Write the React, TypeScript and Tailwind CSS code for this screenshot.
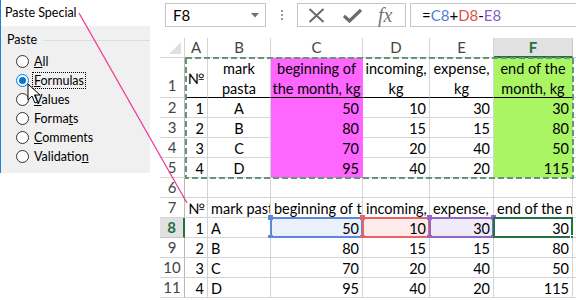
import React from "react";

type Align = "l" | "c" | "r";
type Fill = "pink" | "green" | "none" | "blue" | "red" | "purple";

const alignCls: Record<Align, string> = {
  l: "justify-start text-left",
  c: "justify-center text-center",
  r: "justify-end text-right",
};

const fillCls: Record<Fill, string> = {
  pink: "bg-[#ff66ff] border-[#ff66ff]",
  green: "bg-[#a9f564] border-[#a9f564]",
  none: "bg-white border-[#d4d4d4]",
  blue: "bg-[#ebf1fc] border-[#d4d4d4]",
  red: "bg-[#fdeaea] border-[#d4d4d4]",
  purple: "bg-[#f0ebf8] border-[#d4d4d4]",
};

function Cell({
  children,
  align = "r",
  fill = "none",
  extra = "",
}: {
  children?: React.ReactNode;
  align?: Align;
  fill?: Fill;
  extra?: string;
}) {
  return (
    <div
      className={`relative flex items-center whitespace-nowrap border-r border-b px-[3px] pt-[2px] text-[14.5px] leading-[20px] text-black ${alignCls[align]} ${fillCls[fill]} ${extra}`}
    >
      {children}
    </div>
  );
}

function ColHead({ children, active }: { children?: React.ReactNode; active?: boolean }) {
  return (
    <div
      className={
        active
          ? "flex items-center justify-center border-r border-b-2 border-r-[#c6c6c6] border-b-[#217346] bg-[#e1e1e1] text-[15px] font-bold text-[#217346]"
          : "flex items-center justify-center border-r border-b border-[#d4d4d4] bg-white text-[15px] text-[#444]"
      }
    >
      {children}
    </div>
  );
}

function RowHead({ n, active, bottom }: { n: string; active?: boolean; bottom?: boolean }) {
  return (
    <div
      className={
        active
          ? "flex items-center justify-center border-r-2 border-b border-r-[#217346] border-b-[#c6c6c6] bg-[#e1e1e1] text-[15px] font-bold text-[#217346]"
          : `flex justify-center border-r border-b border-r-[#b8b8b8] border-b-[#d4d4d4] bg-white text-[15px] text-[#444] ${bottom ? "items-end pb-px" : "items-center"}`
      }
    >
      {n}
    </div>
  );
}

// coloured reference box that the formula draws round C8, D8, E8
function RefBox({ line, dot }: { line: string; dot: string }) {
  const sq = `absolute h-[5px] w-[5px] ${dot}`;
  return (
    <>
      <div className={`pointer-events-none absolute -inset-px border-2 ${line}`} />
      <div className={`${sq} -left-[3px] -top-[3px]`} />
      <div className={`${sq} -right-[3px] -top-[3px]`} />
      <div className={`${sq} -left-[3px] -bottom-[3px]`} />
      <div className={`${sq} -right-[3px] -bottom-[3px]`} />
    </>
  );
}

function Radio({ label, checked }: { label: React.ReactNode; checked?: boolean }) {
  return (
    <div className="flex h-[19px] items-center gap-[3px]">
      <div
        className={
          checked
            ? "flex h-[13px] w-[13px] items-center justify-center rounded-full border border-[#0078d7] bg-white"
            : "h-[13px] w-[13px] rounded-full border border-[#333] bg-white"
        }
      >
        {checked && <div className="h-[7px] w-[7px] rounded-full bg-[#0078d7]" />}
      </div>
      <span
        className={
          checked
            ? "border border-dotted border-black px-[1px] leading-[15px]"
            : "border border-transparent px-[1px] leading-[15px]"
        }
      >
        {label}
      </span>
    </div>
  );
}

export default function App() {
  const data = [
    ["1", "A", "50", "10", "30", "30"],
    ["2", "B", "80", "15", "15", "80"],
    ["3", "C", "70", "20", "40", "50"],
    ["4", "D", "95", "40", "20", "115"],
  ];

  return (
    <div className="relative flex h-[300px] w-[576px] items-start overflow-hidden bg-white font-['Lato',sans-serif]">
      {/* Paste Special dialog */}
      <div className="flex h-[173px] w-[150px] shrink-0 flex-col border-l border-[#1883d7] bg-[#f0f0f0] font-['Lato',sans-serif] text-[12.5px] text-black">
        <div className="flex h-[26px] items-center bg-white pl-[4px]">Paste Special</div>
        <div className="mt-[6px] flex items-center gap-[6px] pl-[6px] leading-[16px]">
          <span>Paste</span>
          <div className="h-px flex-1 bg-[#dcdcdc]" />
        </div>
        <div className="mt-[4px] flex flex-col pl-[15px]">
          <Radio label={<><u>A</u>ll</>} />
          <Radio checked label={<><u>F</u>ormulas</>} />
          <Radio label={<><u>V</u>alues</>} />
          <Radio label={<>Forma<u>t</u>s</>} />
          <Radio label={<><u>C</u>omments</>} />
          <Radio label={<>Validatio<u>n</u></>} />
        </div>
      </div>

      {/* worksheet */}
      <div className="ml-[10px] flex w-[416px] shrink-0 flex-col overflow-hidden">
        {/* formula bar */}
        <div className="flex h-[38px] items-start pt-[3px]">
          <div className="ml-[5px] flex h-[24px] w-[101px] shrink-0 items-center justify-between border border-[#c6c6c6] pl-[7px] pr-[6px] text-[15px]">
            <span>F8</span>
            <svg width="8" height="5" viewBox="0 0 8 5">
              <path d="M0 0 H8 L4 4.5 Z" fill="#707070" />
            </svg>
          </div>
          <div className="flex h-[24px] w-[31px] shrink-0 flex-col items-center justify-center gap-[2px]">
            <div className="h-[2px] w-[2px] bg-[#9a9a9a]" />
            <div className="h-[2px] w-[2px] bg-[#9a9a9a]" />
            <div className="h-[2px] w-[2px] bg-[#9a9a9a]" />
          </div>
          <div className="flex h-[24px] w-[109px] shrink-0 items-center border border-[#c6c6c6] pl-[10px]">
            <svg width="17" height="15" viewBox="0 0 17 15">
              <path d="M1.5 1 L15.5 14 M15.5 1 L1.5 14" stroke="#6b6b6b" strokeWidth="2" />
            </svg>
            <svg className="ml-[18px]" width="19" height="15" viewBox="0 0 19 15">
              <path d="M1 8 L6.5 13 L18 2" stroke="#6b6b6b" strokeWidth="3.2" fill="none" />
            </svg>
            <span className="ml-[16px] font-['Liberation_Serif',serif] text-[20px] italic leading-[20px] text-[#777]">
              fx
            </span>
          </div>
          <div className="ml-[4px] flex h-[24px] flex-1 items-center border border-r-0 border-[#c6c6c6] pl-[11px] text-[15px]">
            <span>=</span>
            <span className="text-[#4f7fe0]">C8</span>
            <span>+</span>
            <span className="text-[#e05050]">D8</span>
            <span>-</span>
            <span className="text-[#8e5cc8]">E8</span>
          </div>
        </div>

        {/* grid */}
        <div className="relative">
          <div className="grid grid-cols-[25px_23px_63px_92px_67px_64px_79px_20px] grid-rows-[20px_40px_repeat(10,20px)]">
            {/* column headers */}
            <div className="relative border-r border-b border-[#d4d4d4] bg-white">
              <svg className="absolute bottom-[3px] right-[3px]" width="12" height="12" viewBox="0 0 12 12">
                <path d="M12 0 V12 H0 Z" fill="#dfdfdf" />
              </svg>
            </div>
            <ColHead>A</ColHead>
            <ColHead>B</ColHead>
            <ColHead>C</ColHead>
            <ColHead>D</ColHead>
            <ColHead>E</ColHead>
            <ColHead active>F</ColHead>
            <ColHead />

            {/* row 1 */}
            <RowHead n="1" bottom />
            <Cell align="c" extra="border-b-black">№</Cell>
            <Cell align="c" extra="border-b-black whitespace-normal">
              <div className="leading-[20px]">mark<br />pasta</div>
            </Cell>
            <Cell align="c" fill="pink" extra="border-b-black whitespace-normal">
              <div className="leading-[20px]">beginning of<br />the month, kg</div>
            </Cell>
            <Cell align="c" extra="border-b-black whitespace-normal">
              <div className="leading-[20px]">incoming,<br />kg</div>
            </Cell>
            <Cell align="c" extra="border-b-black whitespace-normal">
              <div className="leading-[20px]">expense,<br />kg</div>
            </Cell>
            <Cell align="c" fill="green" extra="border-b-black whitespace-normal">
              <div className="leading-[20px]">end of the<br />month, kg</div>
            </Cell>
            <Cell />

            {/* rows 2-5 */}
            {data.map((r, i) => (
              <React.Fragment key={"a" + i}>
                <RowHead n={String(i + 2)} />
                <Cell>{r[0]}</Cell>
                <Cell align="c">{r[1]}</Cell>
                <Cell fill="pink">{r[2]}</Cell>
                <Cell>{r[3]}</Cell>
                <Cell>{r[4]}</Cell>
                <Cell fill="green">{r[5]}</Cell>
                <Cell />
              </React.Fragment>
            ))}

            {/* row 6 */}
            <RowHead n="6" />
            <Cell />
            <Cell />
            <Cell />
            <Cell />
            <Cell />
            <Cell />
            <Cell />

            {/* row 7: long headers cut at the cell edge */}
            <RowHead n="7" />
            <Cell align="l">№</Cell>
            <Cell align="l" extra="overflow-hidden">mark past</Cell>
            <Cell align="l" extra="overflow-hidden">beginning of tl</Cell>
            <Cell align="l" extra="overflow-hidden">incoming,</Cell>
            <Cell align="l" extra="overflow-hidden">expense,</Cell>
            <Cell align="l" extra="overflow-hidden">end of the m</Cell>
            <Cell />

            {/* rows 8-11 */}
            {data.map((r, i) => (
              <React.Fragment key={"b" + i}>
                <RowHead n={String(i + 8)} active={i === 0} />
                <Cell>{r[0]}</Cell>
                <Cell align="l">{r[1]}</Cell>
                <Cell fill={i === 0 ? "blue" : "none"}>
                  {r[2]}
                  {i === 0 && <RefBox line="border-[#5b87e0]" dot="bg-[#5b87e0]" />}
                </Cell>
                <Cell fill={i === 0 ? "red" : "none"}>
                  {r[3]}
                  {i === 0 && <RefBox line="border-[#e86464]" dot="bg-[#e86464]" />}
                </Cell>
                <Cell fill={i === 0 ? "purple" : "none"}>
                  {r[4]}
                  {i === 0 && <RefBox line="border-[#9265c9]" dot="bg-[#9265c9]" />}
                </Cell>
                <Cell>
                  {r[5]}
                  {i === 0 && (
                    <>
                      <div className="pointer-events-none absolute -inset-px border-2 border-[#217346]" />
                      <div className="absolute -bottom-[4px] -right-[4px] h-[6px] w-[6px] border border-white bg-[#217346]" />
                    </>
                  )}
                </Cell>
                <Cell />
              </React.Fragment>
            ))}
          </div>

          {/* copy marquee around A1:F5 */}
          <svg className="pointer-events-none absolute left-0 top-0" width="416" height="160">
            <rect x="26" y="20" width="387" height="120" fill="none" stroke="#64957a" strokeWidth="2" strokeDasharray="6 3" />
          </svg>
        </div>
      </div>

      {/* annotation line and mouse pointer */}
      <svg className="pointer-events-none absolute left-0 top-0" width="576" height="300">
        <line x1="79" y1="13" x2="187" y2="203" stroke="#ee3a96" strokeWidth="1.3" />
        <path
          d="M28 84 L28 100 L32 96 L35 103 L37.5 102 L34.5 95 L40 95 Z"
          fill="white"
          stroke="black"
          strokeWidth="1"
          strokeLinejoin="round"
        />
      </svg>
    </div>
  );
}
